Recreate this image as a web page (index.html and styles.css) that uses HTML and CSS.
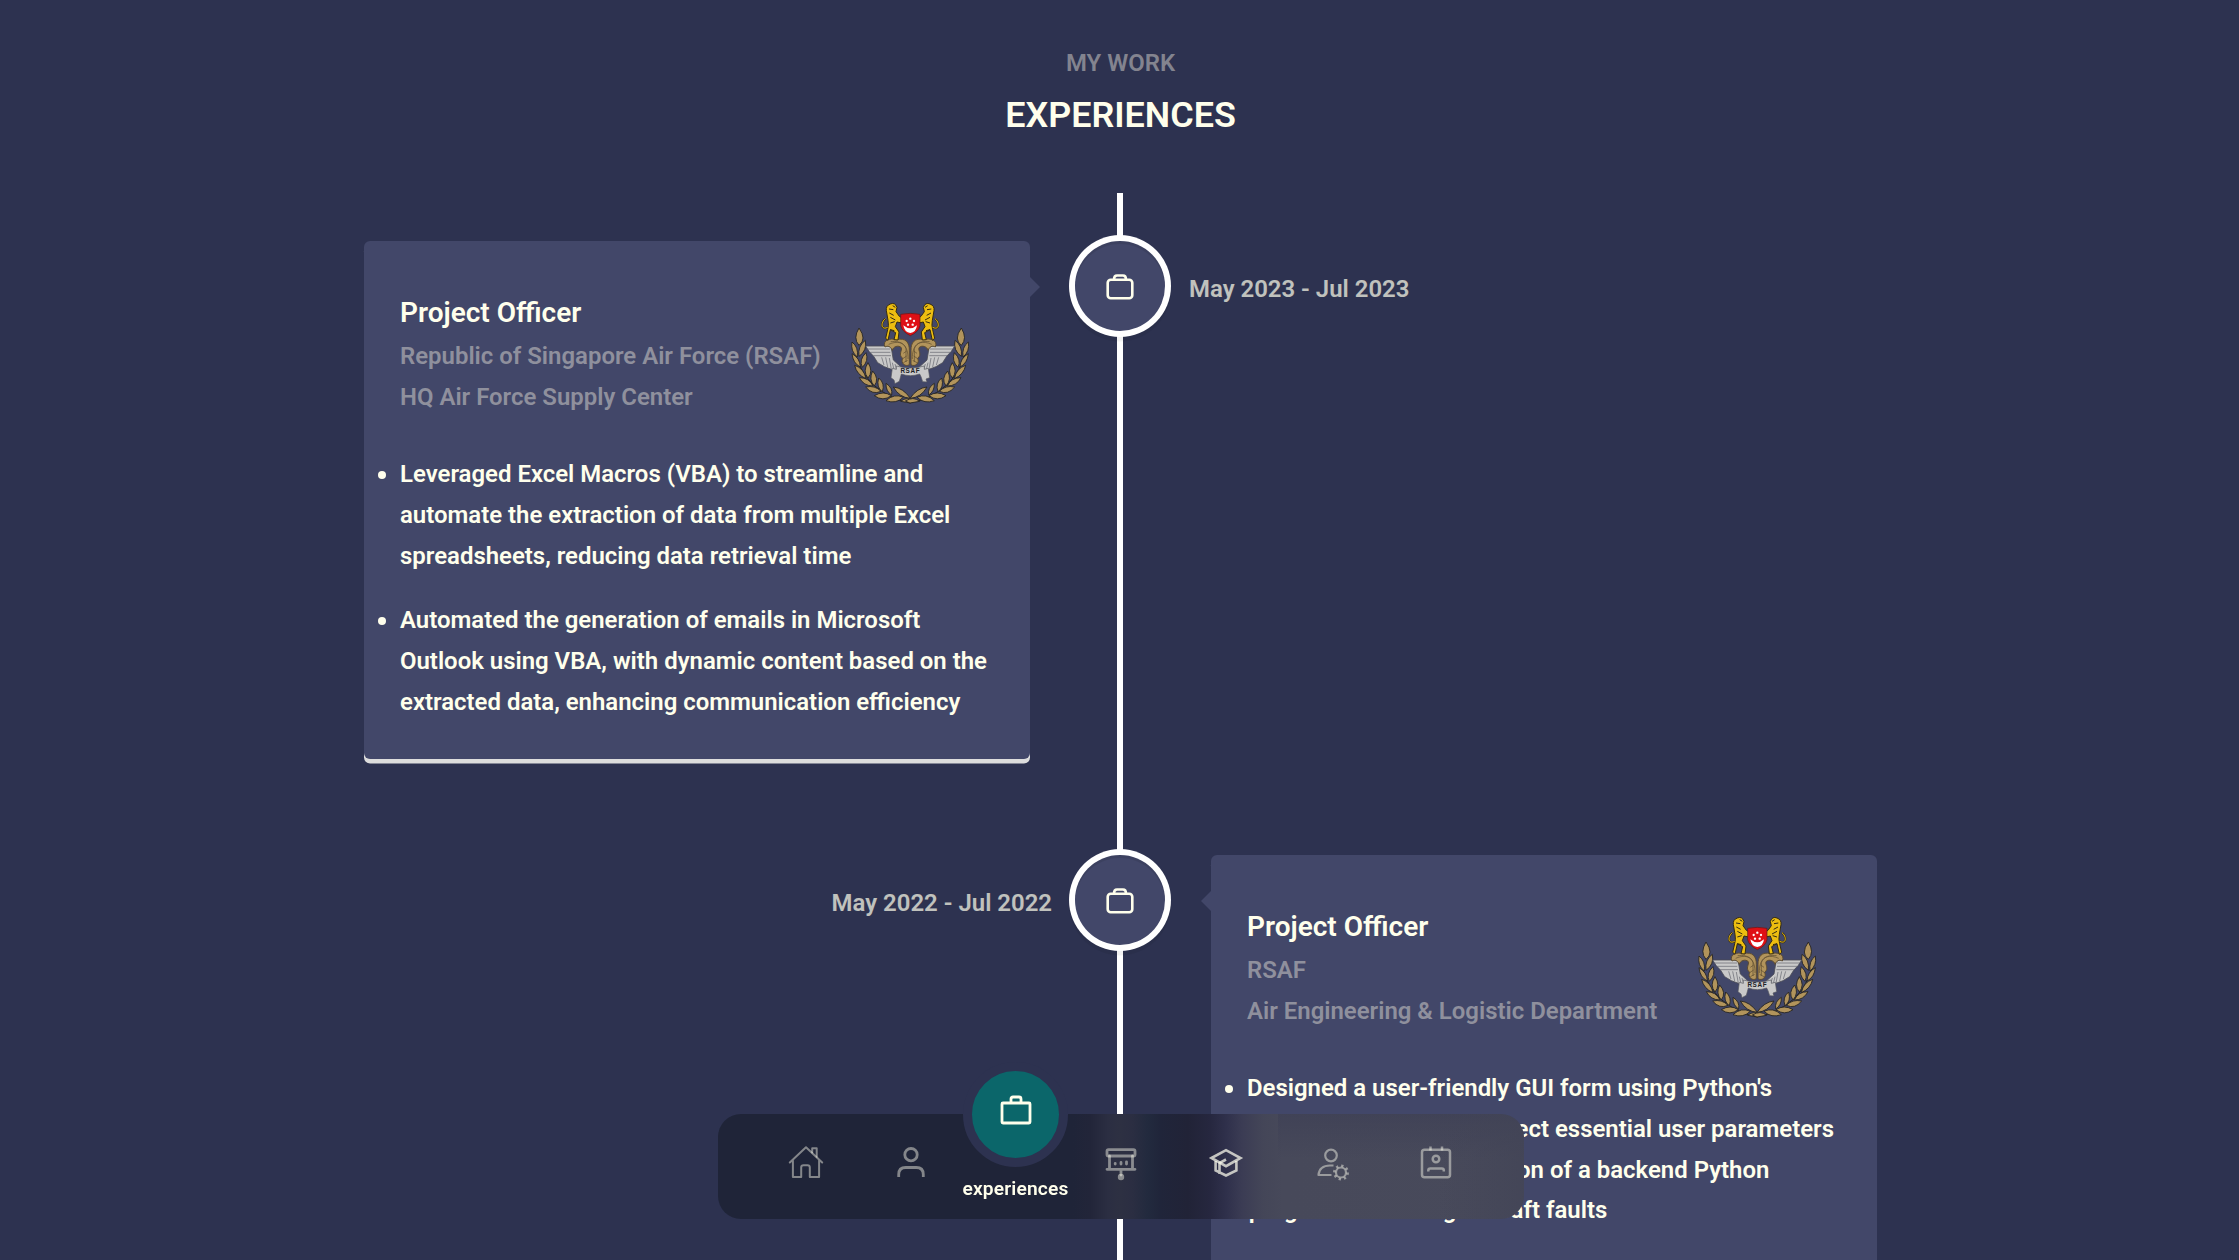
FILE: index.html
```html
<!DOCTYPE html>
<html lang="en">
<head>
<meta charset="utf-8">
<title>Experiences</title>
<link rel="stylesheet" href="styles.css">
</head>
<body>
<svg class="defs" aria-hidden="true">
  <defs>
    <symbol id="bag" viewBox="0 0 32 32"><g fill="none" stroke="currentColor" stroke-width="2.6" stroke-linejoin="round"><rect x="3.7" y="9.7" width="24.6" height="18.6" rx="3"/><path d="M10 9.5c0-3 1-4 3-4h6c2 0 3 1 3 4"/></g></symbol>
    <symbol id="branch" viewBox="0 0 420 375" overflow="visible">
      <g fill="#b2945b" stroke="#242321" stroke-width="2.6" stroke-linejoin="round">
        <path d="M41 175Q62 268 132 308T212 327" fill="none" stroke-width="3"/>
        <path d="M57 114Q81 148 57 166Q38 145 57 114Z"/>
        <path d="M36 156Q56 171 52 201Q31 184 36 156Z"/>
        <path d="M76 151Q82 182 57 199Q53 167 76 151Z"/>
        <path d="M36 191Q60 204 61 231Q39 220 36 191Z"/>
        <path d="M78 188Q87 213 67 232Q56 209 78 188Z"/>
        <path d="M44 226Q72 235 78 266Q50 254 44 226Z"/>
        <path d="M84 218Q101 244 84 264Q67 244 84 218Z"/>
        <path d="M58 263Q88 263 99 288Q71 288 58 263Z"/>
        <path d="M98 243Q119 266 103 288Q85 268 98 243Z"/>
        <path d="M77 291Q105 285 123 304Q97 316 77 291Z"/>
        <path d="M116 264Q136 280 127 305Q108 292 116 264Z"/>
        <path d="M103 317Q130 301 154 317Q129 336 103 317Z"/>
        <path d="M138 280Q159 293 155 315Q137 304 138 280Z"/>
        <path d="M138 332Q163 309 190 322Q168 343 138 332Z"/>
        <path d="M160 291Q190 294 211 325Q178 323 160 291Z"/>
        <path d="M182 334Q201 318 225 333L211 339Z"/>
      </g>
    </symbol>
    <symbol id="wing" viewBox="0 0 420 375" overflow="visible">
      <path d="M77 168H153L160 210L184 232L176 259L154 238L133 230L113 218L101 199L87 184Z" fill="#c9c9c9" stroke="#4b4c55" stroke-width="2.5"/>
      <path d="M83 177H151M91 187H151M100 197H153M132 225L125 202M143 231L137 202M154 238L148 204M164 247L157 218M174 253L165 222" stroke="#61626b" stroke-width="2" fill="none"/>
      <path d="M135 171C126 151 150 143 169 149C197 142 209 158 208 182V224C196 232 181 219 188 205C174 193 187 183 184 173C175 164 159 170 157 181C149 164 139 169 135 171Z" fill="#b2945b" stroke="#5c4b31" stroke-width="3"/>
      <path d="M146 163C173 151 193 158 198 176V216M152 155C184 151 205 165 204 207M190 190L200 183M188 206L200 198M190 218L203 211" stroke="#5c4b31" stroke-width="2" fill="none"/>
      <path d="M151 42Q165 36 171 52L168 65L178 79L190 86L185 99L171 96L166 110L177 126L174 150L162 149L167 128L151 119L144 151L137 145L143 119Q147 107 144 91L139 62Q137 47 151 42Z" fill="#ecbd10" stroke="#332a14" stroke-width="3"/>
      <path d="M143 112C123 122 121 98 136 86" stroke="#332a14" stroke-width="6" fill="none"/>
      <path d="M143 112C123 122 121 98 136 86" stroke="#ecbd10" stroke-width="3" fill="none"/>
      <path d="M147 57l13 2M148 69l13 7M151 82l15 8M151 99l13-4M151 119l12 3M158 47l8 5" stroke="#332a14" stroke-width="3" fill="none"/>
    </symbol>
    <symbol id="crest" viewBox="33 33 360 315">
      <use href="#branch" width="420" height="375"/>
      <use href="#branch" width="420" height="375" transform="translate(421 0) scale(-1 1)"/>
      <use href="#wing" width="420" height="375"/>
      <use href="#wing" width="420" height="375" transform="translate(421 0) scale(-1 1)"/>
      <path d="M182 73Q211 67 240 73V107Q236 126 211 137Q186 125 182 107Z" fill="#df1015" stroke="#541d1d" stroke-width="2"/>
      <path d="M190 106Q211 124 231 106Q228 128 211 129Q193 127 190 106Z" fill="#fff"/>
      <g fill="#fff"><circle cx="211" cy="86" r="3.500"/><circle cx="200" cy="93" r="3.500"/><circle cx="222" cy="93" r="3.500"/><circle cx="204" cy="104" r="3.500"/><circle cx="218" cy="104" r="3.500"/></g>
      <path d="M157 235L169 238V228Q211 240 253 228V238L265 235L269 263L258 267L261 276L248 275L243 260L239 252Q211 262 184 252L178 274L165 281L162 270L153 263Z" fill="#c9c9c9" stroke="#55565e" stroke-width="2"/>
      <text x="211" y="250" text-anchor="middle" class="crest-text">RSAF</text>
    </symbol>
  </defs>
</svg>

<header class="heading">
  <p class="heading-sub">MY WORK</p>
  <h2 class="heading-title">EXPERIENCES</h2>
</header>

<main class="timeline">
  <section class="entry">
    <article class="card card-left">
      <div class="card-head">
        <div>
          <h3 class="card-title">Project Officer</h3>
          <p class="card-org">Republic of Singapore Air Force (RSAF)<br>HQ Air Force Supply Center</p>
        </div>
        <svg class="crest"><use href="#crest"/></svg>
      </div>
      <ul class="points">
        <li>Leveraged Excel Macros (VBA) to streamline and<br>automate the extraction of data from multiple Excel<br>spreadsheets, reducing data retrieval time</li>
        <li>Automated the generation of emails in Microsoft<br>Outlook using VBA, with dynamic content based on the<br>extracted data, enhancing communication efficiency</li>
      </ul>
    </article>
    <div class="node"><svg class="node-icon"><use href="#bag"/></svg></div>
    <span class="date">May 2023 - Jul 2023</span>
  </section>

  <section class="entry entry-right">
    <span class="date">May 2022 - Jul 2022</span>
    <div class="node"><svg class="node-icon"><use href="#bag"/></svg></div>
    <article class="card card-right">
      <div class="card-head">
        <div>
          <h3 class="card-title">Project Officer</h3>
          <p class="card-org">RSAF<br>Air Engineering &amp; Logistic Department</p>
        </div>
        <svg class="crest"><use href="#crest"/></svg>
      </div>
      <ul class="points">
        <li>Designed a user-friendly GUI form using Python's<br><span class="lead lead-a">Tkinter framework to collect</span> essential user parameters<br><span class="lead lead-b">and automate the execution</span> of a backend Python<br><span class="lead lead-c">program for finding aircraft</span> faults</li>
      </ul>
    </article>
  </section>
</main>

<nav class="nav">
  <a class="nav-item"><svg class="nav-icon" viewBox="0 0 36 36"><g fill="none" stroke="currentColor" stroke-width="2" stroke-linejoin="round" stroke-linecap="round"><path d="M1.8 17.5L18 2.2l16.200 15.300M4.900 15.300V32h8.300V22.500q0-2.300 2.300-2.300h4q2.300 0 2.300 2.300V32h9.300V15.300"/><path d="M24.200 7.600V3.200h4.500v8.500"/></g></svg></a>
  <a class="nav-item"><svg class="nav-icon" viewBox="0 0 36 36"><g fill="none" stroke="currentColor" stroke-width="2.8"><circle cx="18" cy="9.700" r="6.200"/><path d="M5.700 32v-2.500q0-7 7-7h10.600q7 0 7 7V32"/></g></svg></a>
  <a class="nav-item nav-active">
    <span class="bubble"><svg class="bubble-icon" viewBox="0 0 36 36"><g fill="none" stroke="currentColor" stroke-width="2.8" stroke-linejoin="round"><rect x="4" y="11" width="28" height="20" rx="1"/><path d="M13 11V7q0-2 2-2h6q2 0 2 2v4"/></g></svg></span>
    <span class="nav-label">experiences</span>
  </a>
  <a class="nav-item"><svg class="nav-icon" viewBox="0 0 36 36"><g fill="none" stroke="currentColor" stroke-width="2.800" stroke-linejoin="round" stroke-linecap="round"><rect x="4" y="4.700" width="28" height="6.300" rx="1.500"/><path d="M6.500 11v13M29.500 11v13M4 24.300h28M18 25v5M12.200 19v-.5M18 19v-1.500M23.500 19v-2.200"/></g><circle cx="18" cy="32" r="3.200" fill="currentColor"/></svg></a>
  <a class="nav-item nav-bright"><svg class="nav-icon" viewBox="0 0 36 36"><g fill="none" stroke="currentColor" stroke-width="2.600"><path d="M3.500 13L18 5.200 32.500 13 18 21.200z"/><path d="M7.600 16v9.500L18 30.500l10.400-5V16M11.500 29V18l6.500-3.500"/></g></svg></a>
  <a class="nav-item"><svg class="nav-icon" viewBox="0 0 36 36"><g fill="none" stroke="currentColor" stroke-width="2.200"><circle cx="18" cy="10.500" r="5.800"/><path d="M20.500 20.500H17C9.500 20.500 6 24.500 5.500 30H18.500" stroke-linejoin="round"/><circle cx="28" cy="27.500" r="5"/><circle cx="28" cy="27.500" r="6.800" stroke-width="2.400" stroke-dasharray="2.300 3.040"/></g></svg></a>
  <a class="nav-item"><svg class="nav-icon" viewBox="0 0 36 36"><g fill="none" stroke="currentColor" stroke-width="2.500"><rect x="4" y="4.800" width="28" height="27.500" rx="2.500"/><path d="M12.500 1.500v4M24 1.500v4M10.300 26.500v-1q0-2 2-2h11.500q2 0 2 2v1"/><circle cx="18" cy="14" r="3.300"/></g></svg></a>
</nav>
</body>
</html>
```
FILE: styles.css
```css
* { box-sizing: border-box; }
html, body { height: 1260px; overflow: hidden; }
body {
  margin: 0;
  padding-left: 2px;
  background: #2d3250;
  color: #ffffec;
  font: 600 23.95px/40.8px Roboto, "Liberation Sans", sans-serif;
}
h2, h3, p, ul { margin: 0; padding: 0; font-weight: inherit; }
svg { display: block; }
.defs { display: none; }

.heading { padding-top: 43px; text-align: center; height: 193px; }
.heading-sub { color: #83848f; }
.heading-title { font-size: 35.9px; line-height: 62px; }

.timeline {
  width: 1513px;
  margin: 0 auto;
  padding-top: 48px;
  background: linear-gradient(#fff, #fff) 753px 0 / 6px 100% no-repeat;
}
.entry { display: flex; align-items: flex-start; margin-bottom: 96px; }
.card {
  position: relative;
  width: 666px;
  min-height: 518px;
  padding: 60px 23px 0 36px;
  border-radius: 6px;
  background: #424769;
  box-shadow: 0 4.5px 0 #ddd;
}
.card::before {
  content: "";
  position: absolute;
  top: 36px;
  border: 10px solid transparent;
}
.card-left::before { left: 100%; border-left-color: #424769; border-right-width: 0; }
.card-right::before { right: 100%; border-right-color: #424769; border-left-width: 0; }
.card-head { display: flex; justify-content: space-between; height: 134px; }
.card-head > div { margin-top: -10px; white-space: nowrap; }
.card-title { font-size: 28px; line-height: 44px; }
.card-org { margin-top: 1px; color: #8f909d; }
.crest { width: 120px; height: 105px; margin-right: 36px; flex: none; }
.crest-text { font: bold 19px "Liberation Sans", sans-serif; fill: #202126; letter-spacing: 2px; }
.points { margin-top: 19px; white-space: nowrap; list-style: none; }
.points li { margin-bottom: 24px; }
.points li::before {
  content: "";
  float: left;
  width: 8px;
  height: 8px;
  margin: 17px 0 0 -22px;
  border-radius: 50%;
  background: #ffffec;
}
.lead { display: inline-flex; justify-content: flex-end; }
.lead-a { width: 302px; }
.lead-b { width: 297px; }
.lead-c { width: 293px; }
.node {
  display: grid;
  place-items: center;
  width: 90px;
  height: 90px;
  margin-left: 45px;
  border-radius: 50%;
  background: #424769;
  box-shadow: 0 0 0 6px #fff, inset 0 3px 0 rgba(0,0,0,.08), 0 4.5px 0 6px rgba(0,0,0,.05);
}
.node-icon { width: 32px; height: 32px; }
.date { margin: 28px 0 0 24px; opacity: .7; white-space: nowrap; }
.entry-right .date { width: 688px; margin-left: 0; text-align: right; }
.entry-right .node { margin-left: 23px; }
.entry-right .card { margin-left: 46px; }

.nav {
  position: fixed;
  left: 718px;
  top: 1114px;
  display: flex;
  width: 806px;
  height: 105px;
  padding: 0 35px;
  border-radius: 23px;
  background:
    linear-gradient(90deg, rgba(66,68,86,0) 720px, rgba(66,68,86,.7) 806px),
    linear-gradient(rgba(60,62,84,.6), rgba(60,62,84,0) 45px) 560px 0 / 246px 100% no-repeat,
    linear-gradient(90deg, #1f2438 0, #1f2438 355px, #222539 372px, #2b2e42 390px, #2d3042 402px,
      #2b2e42 414px, #222a3e 430px, #20253a 442px, #212337 470px, #26273f 492px,
      #2f304b 508px, #3b3c54 524px, #444658 545px, #47495a 565px, #484a5b 806px);
}
.nav-item {
  display: flex;
  flex-direction: column;
  align-items: center;
  justify-content: center;
  width: 105px;
  padding-bottom: 7px;
  color: rgba(255,255,240,.45);
}
.nav-bright { color: rgba(255,255,240,.72); }
.nav-icon { width: 36px; height: 36px; }
.nav-active { justify-content: flex-start; color: #ffffec; }
.bubble {
  display: grid;
  place-items: center;
  flex: none;
  width: 105px;
  height: 105px;
  margin-top: -52px;
  padding-bottom: 9px;
  border: 9px solid #2d3250;
  border-radius: 50%;
  background: #0b666a;
}
.bubble-icon { width: 36px; height: 36px; }
.nav-label { margin-top: 10px; font-size: 19.2px; line-height: 24px; letter-spacing: .15px; }
```
